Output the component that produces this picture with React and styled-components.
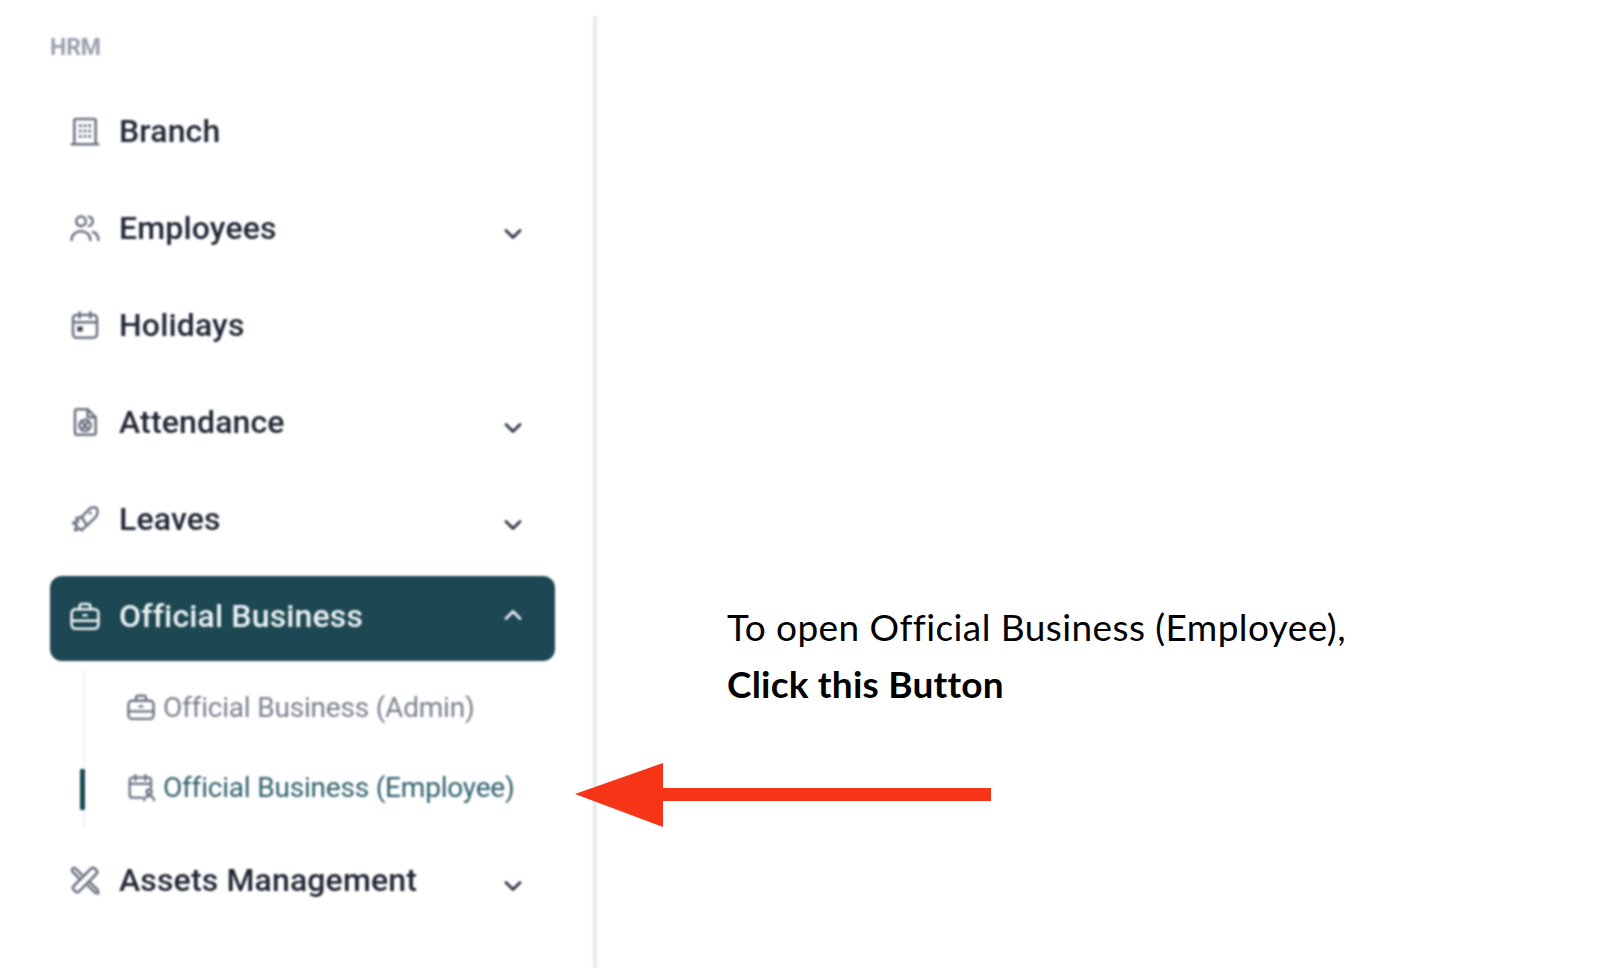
import React from "react";
import styled, { createGlobalStyle } from "styled-components";
import { ChevronDown, ChevronUp } from "lucide-react";

const GlobalStyle = createGlobalStyle`
  html, body {
    margin: 0;
    padding: 0;
    background: #fff;
  }
  body {
    font-family: Roboto, "Liberation Sans", sans-serif;
  }
`;

const Page = styled.div`
  position: relative;
  display: flex;
  width: 1618px;
  height: 968px;
  overflow: hidden;
  background: #fff;
`;

const Sidebar = styled.aside`
  box-sizing: border-box;
  width: 597px;
  height: 952px;
  margin-top: 16px;
  padding: 19px 38px 0 50px;
  border-right: 4px solid #e8eaee;
  filter: blur(0.85px);
`;

const SectionLabel = styled.div`
  height: 56px;
  font-size: 23px;
  line-height: 26px;
  font-weight: 700;
  letter-spacing: -0.1px;
  color: #98a0ae;
`;

const Menu = styled.nav`
  display: flex;
  flex-direction: column;
  gap: 12px;
`;

const Row = styled.div`
  display: flex;
  align-items: center;
  box-sizing: border-box;
  height: 85px;
  padding: 0 28px 5px 19px;
  border-radius: 12px;
  background: ${(p) => (p.$active ? "#1d4752" : "transparent")};
  color: ${(p) => (p.$active ? "#eef4f5" : "#1f2533")};
`;

const RowIcon = styled.svg`
  flex: none;
  width: 32px;
  height: 32px;
  margin-right: 18px;
  fill: none;
  stroke: ${(p) => (p.$active ? "#eef4f5" : "#6c7382")};
  stroke-width: 1.9;
  stroke-linecap: round;
  stroke-linejoin: round;
`;

const RowLabel = styled.span`
  flex: 1;
  font-size: 32px;
  font-weight: 500;
  letter-spacing: 0.15px;
  white-space: nowrap;
`;

const Caret = styled.span`
  display: flex;
  margin-top: ${(p) => (p.$open ? "-2px" : "11px")};
  color: ${(p) => (p.$open ? "#e8eff1" : "#2f3645")};
`;

const SubMenu = styled.div`
  position: relative;
  display: flex;
  flex-direction: column;
  height: 158px;
  margin: 9px 0 0 33px;
  border-left: 2px solid #eef0f3;
`;

const SubRow = styled.div`
  position: relative;
  display: flex;
  align-items: center;
  box-sizing: border-box;
  flex: none;
  height: 80px;
  padding: 0 0 6px 41px;
  font-size: 28px;
  letter-spacing: -0.2px;
  white-space: nowrap;
  color: ${(p) => (p.$current ? "#2f5f6b" : "#7a808e")};
`;

const Marker = styled.span`
  position: absolute;
  left: -5px;
  top: 19px;
  width: 5px;
  height: 41px;
  border-radius: 1px;
  background: #1d4752;
`;

const SubIcon = styled.svg`
  flex: none;
  width: 30px;
  height: 30px;
  margin-right: 7px;
  fill: none;
  stroke: #6c7382;
  stroke-width: 1.9;
  stroke-linecap: round;
  stroke-linejoin: round;
`;

const Main = styled.main`
  flex: 1;
  padding: 598px 0 0 130px;
`;

const Note = styled.p`
  margin: 0;
  font-family: Lato, "Open Sans", sans-serif;
  font-size: 37px;
  line-height: 57px;
  letter-spacing: 0.42px;
  color: #000;
  white-space: nowrap;
`;

const Strong = styled.strong`
  display: block;
  font-weight: 700;
  letter-spacing: 0.2px;
`;

const Arrow = styled.svg`
  position: absolute;
  left: 575px;
  top: 763px;
  width: 417px;
  height: 64px;
`;

const icons = {
  building: (
    <>
      <path d="M2 22h20M4 22V4c0-.6.4-1 1-1h14c.6 0 1 .4 1 1v18" />
      <path d="M8.500 8h.01M12 8h.01M15.500 8h.01M8.500 12h.01M12 12h.01M15.500 12h.01M8.500 16h.01M12 16h.01M15.500 16h.01" strokeWidth="2.400" />
    </>
  ),
  users: (
    <>
      <circle cx="9" cy="7" r="3.600" />
      <path d="M2 21c0-4 3-6.500 7-6.500s7 2.500 7 6.500" />
      <path d="M15 3.500a3.600 3.600 0 0 1 0 7M18 15c2.500.8 4 3 4 6" />
    </>
  ),
  calendar: (
    <>
      <rect x="3" y="4.500" width="18" height="17" rx="2.500" />
      <path d="M3 10h18M8 2.500v4M16 2.500v4" />
      <rect x="6.500" y="13.500" width="3.500" height="3" fill="currentColor" strokeWidth="1" />
    </>
  ),
  attendance: (
    <>
      <path d="M6 2.500h8l6 6v11.500a1.500 1.500 0 0 1-1.500 1.500h-12.500a1.500 1.500 0 0 1-1.500-1.500v-16a1.500 1.500 0 0 1 1.500-1.500z" />
      <path d="M14 2.500v6h6" />
      <circle cx="12" cy="14.500" r="4.200" />
      <path d="M9.500 11.500l5 6M14.500 11.500l-5 6" />
    </>
  ),
  leaves: (
    <>
      <path d="M9.500 10.500l6-6.300c1.500-1.200 5.500-1.200 5.800.8.400 2.300-.3 4.500-1.800 6l-6 6z" />
      <path d="M16 7.500h.01" strokeWidth="2.400" />
      <path d="M9.500 10.500l-4 1 1.500 2-4 1.500 3 1.500-1.500 4 3.500-1.500 1.500 1.500 3.500-3.500" />
    </>
  ),
  briefcase: (
    <>
      <rect x="2" y="7" width="20" height="14.500" rx="2.800" />
      <path d="M8 7V4.800c0-1 .8-1.800 1.800-1.800h4.400c1 0 1.800.8 1.800 1.800V7" />
      <path d="M2 15.500h20M10.800 11.500h2.400" />
    </>
  ),
  calendarUser: (
    <>
      <path d="M13 20.500H5a2 2 0 0 1-2-2V6.500a2 2 0 0 1 2-2h13a2 2 0 0 1 2 2v6" />
      <path d="M3 9.500h17M7.500 2.500v4M15.500 2.500v4" />
      <circle cx="18.500" cy="16" r="2" />
      <path d="M14.500 22.500c0-2 1.800-3.200 4-3.200s4 1.200 4 3.200" />
    </>
  ),
  tools: (
    <>
      <path d="M3.500 16.500l13-13c.8-.8 2-.8 2.800 0l1.200 1.200c.8.800.8 2 0 2.800l-13 13c-.8.800-2 .8-2.800 0l-1.200-1.200c-.8-.8-.8-2 0-2.800z" />
      <path d="M9.500 8l-4.500-4.500c-.7-.7-1.700-.7-2.300 0-.6.600-.6 1.600 0 2.300l4.500 4.500" />
      <path d="M14 16l5.500 5.500 2.500.5-.5-2.500-5.500-5.500" />
    </>
  ),
};

function Icon({ name, active }) {
  return (
    <RowIcon viewBox="0 0 24 24" $active={active}>
      {icons[name]}
    </RowIcon>
  );
}

function MenuRow({ icon, label, caret, active }) {
  return (
    <Row $active={active}>
      <Icon name={icon} active={active} />
      <RowLabel>{label}</RowLabel>
      {caret && (
        <Caret $open={active}>
          {active ? <ChevronUp size={28} strokeWidth={2.4} /> : <ChevronDown size={28} strokeWidth={2.4} />}
        </Caret>
      )}
    </Row>
  );
}

export default function App() {
  return (
    <Page>
      <GlobalStyle />
      <Sidebar>
        <SectionLabel>HRM</SectionLabel>
        <Menu>
          <MenuRow icon="building" label="Branch" />
          <MenuRow icon="users" label="Employees" caret />
          <MenuRow icon="calendar" label="Holidays" />
          <MenuRow icon="attendance" label="Attendance" caret />
          <MenuRow icon="leaves" label="Leaves" caret />
          <div>
            <MenuRow icon="briefcase" label="Official Business" caret active />
            <SubMenu>
              <SubRow>
                <SubIcon viewBox="0 0 24 24">{icons.briefcase}</SubIcon>
                Official Business (Admin)
              </SubRow>
              <SubRow $current>
                <Marker />
                <SubIcon viewBox="0 0 24 24">{icons.calendarUser}</SubIcon>
                Official Business (Employee)
              </SubRow>
            </SubMenu>
          </div>
          <MenuRow icon="tools" label="Assets Management" caret />
        </Menu>
      </Sidebar>
      <Main>
        <Note>
          To open Official Business (Employee),
          <Strong>Click this Button</Strong>
        </Note>
      </Main>
      <Arrow viewBox="0 0 417 64">
        <path d="M0 31 88 0V25H416V38H88V64Z" fill="#f53418" />
      </Arrow>
    </Page>
  );
}
